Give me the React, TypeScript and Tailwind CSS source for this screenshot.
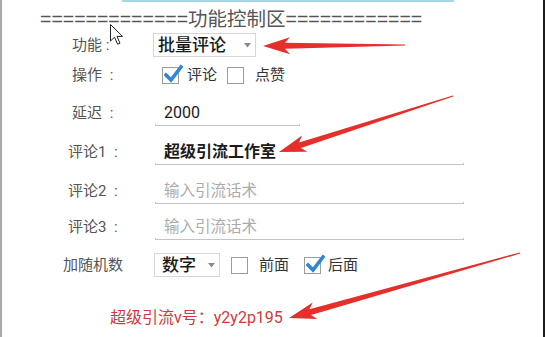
import React from "react";

const CJK = { fontFamily: 'Roboto, "Noto Sans CJK SC", sans-serif' };
const HDR = { fontFamily: '"Liberation Sans", "Noto Sans CJK SC", sans-serif' };

function arrowPts(tx: number, ty: number, sx: number, sy: number) {
  const dx = tx - sx;
  const dy = ty - sy;
  const L = Math.hypot(dx, dy);
  const ux = dx / L;
  const uy = dy / L;
  const nx = -uy;
  const ny = ux;
  const headLen = 22;
  const at = (d: number, w: number) => [sx + ux * d + nx * w, sy + uy * d + ny * w];
  const pts = [
    at(0, 0.6),
    at(L - headLen, 3),
    at(L - headLen - 5, 8.5),
    at(L, 0),
    at(L - headLen - 5, -8.5),
    at(L - headLen, -3),
    at(0, -0.6),
  ];
  return pts.map((p) => `${p[0].toFixed(1)},${p[1].toFixed(1)}`).join(" ");
}

function Box({ checked }: { checked?: boolean }) {
  return (
    <span className="relative inline-block w-[17px] h-[17px] border border-[#9c9c9c] bg-white shrink-0">
      {checked && (
        <svg className="absolute left-[1px] top-[-4px]" width="19" height="19" viewBox="0 0 19 19">
          <path d="M2 11 L7 16 L17 3" fill="none" stroke="#2f86d6" strokeWidth="3.6" strokeLinecap="square" />
        </svg>
      )}
    </span>
  );
}

function Tri() {
  return (
    <svg width="7" height="5" viewBox="0 0 7 5">
      <path d="M0 0 L7 0 L3.5 4.5 Z" fill="#8a8a8a" />
    </svg>
  );
}

function Label({ text, pad }: { text: string; pad: string }) {
  return (
    <div className={`w-[151px] shrink-0 text-[15px] text-[#555] whitespace-pre ${pad}`} style={CJK}>
      {text}
    </div>
  );
}

function Input({ value, placeholder, w, bold }: { value?: string; placeholder?: string; w: string; bold?: boolean }) {
  return (
    <div className={`ml-[2px] flex flex-col ${w}`}>
      <div
        className={`h-[22px] leading-[22px] pl-[9px] ${value ? "text-[16px] text-[#1a1a1a]" : "text-[15.5px] text-[#ababab]"} ${bold ? "font-bold" : ""}`}
        style={CJK}
      >
        {value ?? placeholder}
      </div>
      <div className="h-[2px] border-b border-x border-[#c4c4c4]" />
    </div>
  );
}

export default function App() {
  return (
    <div className="relative w-[545px] h-[337px] bg-white overflow-hidden border-l-2 border-l-[#a9a9a9] border-r-2 border-r-[#1c1c1c]">
      <div className="ml-[120px] w-[332px] h-[2px] bg-[#a4d6e4]" />

      <div className="mt-[7px] h-[20px] leading-[20px] pl-[38px] text-[19.5px] text-[#555] whitespace-pre" style={HDR}>
        =============功能控制区============
      </div>

      <div className="mt-[4px] h-[24px] flex items-center">
        <Label text="功能 :" pad="pl-[70px]" />
        <div className="w-[103px] h-[24px] border border-[#d6d6d6] flex items-center pl-[4px] pr-[4px] justify-between">
          <span className="text-[17px] font-medium text-[#1a1a1a] leading-none" style={CJK}>批量评论</span>
          <Tri />
        </div>
      </div>

      <div className="mt-[9px] h-[18px] flex items-center">
        <Label text={"操作\u2002:"} pad="pl-[70px]" />
        <div className="ml-[9px] flex items-center text-[15px] text-[#333]" style={CJK}>
          <Box checked />
          <span className="ml-[8px]">评论</span>
          <span className="ml-[10px] flex"><Box /></span>
          <span className="ml-[11px]">点赞</span>
        </div>
      </div>

      <div className="mt-[18px] flex items-start">
        <div className="h-[22px] flex items-center">
          <Label text={"延迟\u2002:"} pad="pl-[70px]" />
        </div>
        <Input value="2000" w="w-[145px]" />
      </div>

      <div className="mt-[15px] flex items-start">
        <div className="h-[22px] flex items-center">
          <Label text={"评论1\u2002:"} pad="pl-[66px]" />
        </div>
        <Input value="超级引流工作室" w="w-[309px]" bold />
      </div>

      <div className="mt-[15px] flex items-start">
        <div className="h-[22px] flex items-center">
          <Label text={"评论2\u2002:"} pad="pl-[66px]" />
        </div>
        <Input placeholder="输入引流话术" w="w-[309px]" />
      </div>

      <div className="mt-[12px] flex items-start">
        <div className="h-[22px] flex items-center">
          <Label text={"评论3\u2002:"} pad="pl-[66px]" />
        </div>
        <Input placeholder="输入引流话术" w="w-[309px]" />
      </div>

      <div className="mt-[13px] h-[24px] flex items-center">
        <Label text="加随机数" pad="pl-[61px]" />
        <div className="ml-[1px] w-[66px] h-[24px] border border-[#d6d6d6] flex items-center pl-[7px] pr-[4px] justify-between">
          <span className="text-[17px] font-medium text-[#1a1a1a] leading-none" style={CJK}>数字</span>
          <Tri />
        </div>
        <div className="ml-[11px] flex items-center text-[15px] text-[#333]" style={CJK}>
          <Box />
          <span className="ml-[11px]">前面</span>
          <span className="ml-[15px] flex"><Box checked /></span>
          <span className="ml-[7px]">后面</span>
        </div>
      </div>

      <div className="mt-[31px] h-[20px] leading-[20px] pl-[108px] text-[16px] text-[#d03a3a]" style={CJK}>
        超级引流v号：y2y2p195
      </div>

      <svg className="absolute left-[-2px] top-0 pointer-events-none" width="545" height="337" viewBox="0 0 545 337">
        <polygon points={arrowPts(263, 46, 405, 45)} fill="#e62e2b" />
        <polygon points={arrowPts(279, 152, 453, 96)} fill="#e62e2b" />
        <polygon points={arrowPts(289, 318, 520, 253)} fill="#e62e2b" />
        <path
          d="M110.5 24.5 L110.5 41 L114.5 37.2 L117.6 44.2 L120 43.2 L117 36.4 L122.5 36.4 Z"
          fill="#fff"
          stroke="#222"
          strokeWidth="1"
          strokeLinejoin="round"
        />
      </svg>
    </div>
  );
}
